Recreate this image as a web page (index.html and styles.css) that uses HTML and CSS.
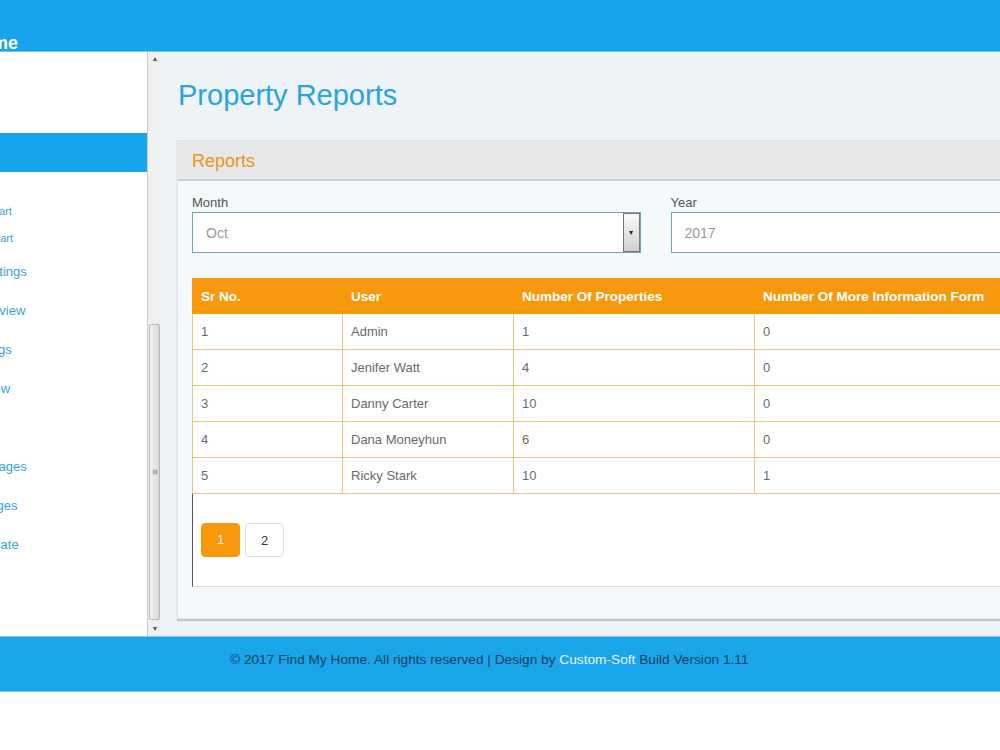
FILE: index.html
```html
<!DOCTYPE html>
<html lang="en">
<head>
    <meta charset="UTF-8">
    <meta name="viewport" content="width=device-width, initial-scale=1.0">
    <title>Property Reports</title>
    <link rel="stylesheet" href="styles.css">
</head>
<body>

<div class="page">
    <header class="topbar">
        <span class="brand">Find My Home</span>
    </header>

    <div class="layout">
        <aside class="sidebar">
            <div class="profile"></div>
            <div class="menu-active">Dashboard</div>
            <ul class="menu">
                <li class="sub"><a href="#">Pie Chart</a></li>
                <li class="sub"><a href="#">Bar Chart</a></li>
                <li><a href="#">Property Listings</a></li>
                <li><a href="#">Property Review</a></li>
                <li><a href="#">Agent Listings</a></li>
                <li><a href="#">Agent Review</a></li>
                <li><a href="#">Reports</a></li>
                <li><a href="#">Agent Messages</a></li>
                <li><a href="#">Manage Pages</a></li>
                <li><a href="#">Email Template</a></li>
                <li><a href="#">Logout</a></li>
            </ul>
        </aside>

        <div class="scrollbar">
            <div class="sb-arrow">&#9652;</div>
            <div class="sb-track">
                <div class="sb-thumb"><span class="sb-grip">&#8801;</span></div>
            </div>
            <div class="sb-arrow">&#9662;</div>
        </div>

        <main class="content">
            <h1>Property Reports</h1>

            <div class="panel">
                <div class="panel-heading">Reports</div>
                <div class="panel-body">
                    <div class="filters">
                        <div class="field">
                            <label>Month</label>
                            <div class="select">
                                <span>Oct</span>
                                <span class="select-btn">&#9662;</span>
                            </div>
                        </div>
                        <div class="field">
                            <label>Year</label>
                            <div class="select">
                                <span>2017</span>
                            </div>
                        </div>
                    </div>

                    <table class="report">
                        <thead>
                            <tr>
                                <th class="c1">Sr No.</th>
                                <th class="c2">User</th>
                                <th class="c3">Number Of Properties</th>
                                <th>Number Of More Information Form</th>
                            </tr>
                        </thead>
                        <tbody>
                            <tr><td>1</td><td>Admin</td><td>1</td><td>0</td></tr>
                            <tr><td>2</td><td>Jenifer Watt</td><td>4</td><td>0</td></tr>
                            <tr><td>3</td><td>Danny Carter</td><td>10</td><td>0</td></tr>
                            <tr><td>4</td><td>Dana Moneyhun</td><td>6</td><td>0</td></tr>
                            <tr><td>5</td><td>Ricky Stark</td><td>10</td><td>1</td></tr>
                        </tbody>
                    </table>

                    <div class="pager-box">
                        <div class="pager">
                            <a href="#" class="active">1</a>
                            <a href="#">2</a>
                        </div>
                    </div>
                </div>
            </div>
        </main>
    </div>

    <footer class="footer">
        &copy; 2017 Find My Home. All rights reserved | Design by <span class="credit">Custom-Soft</span> Build Version 1.11
    </footer>
</div>

</body>
</html>
```

FILE: styles.css
```css
/* page is wider than the window and shifted left, like the capture */
body {
    margin: 0;
    background-color: #fff;
    font-family: "Liberation Sans", Arial, sans-serif;
    overflow: hidden;
}

.page {
    width: 1250px;
    margin-left: -100px;
}

.topbar {
    height: 51px;
    background-color: #17a4ea;
    border-bottom: 1px solid #6cc6f2;
    display: flex;
    align-items: flex-start;
}

.brand {
    color: #fff;
    font-weight: bold;
    font-size: 18px;
    line-height: 22px;
    margin: 32px 0 0 -5px;
}

.layout {
    display: flex;
    height: 584px;
}

/* sidebar */
.sidebar {
    width: 247px;
    background-color: #fff;
    overflow: hidden;
}

.profile {
    height: 81px;
}

.menu-active {
    height: 39px;
    background-color: #17a4ea;
    color: #17a4ea;
    padding-left: 30px;
    line-height: 39px;
    font-size: 13px;
}

.menu {
    list-style: none;
    margin: 0;
    padding: 28px 0 0;
}

.menu li {
    height: 39px;
    line-height: 20px;
    padding-left: 30px;
}

.menu li.sub {
    height: 27px;
    padding-left: 66px;
}

.menu li.sub + li:not(.sub) {
    margin-top: 7px;
}

.menu a {
    color: #3da2d2;
    font-size: 13px;
    text-decoration: none;
}

.menu li.sub a {
    font-size: 11px;
}

/* fake scrollbar */
.scrollbar {
    width: 13px;
    border-left: 1px solid #c9c9c9;
    background-color: #f0f0f0;
    display: flex;
    flex-direction: column;
}

.sb-arrow {
    height: 14px;
    font-size: 8px;
    line-height: 14px;
    text-align: center;
    color: #555;
}

.sb-track {
    flex: 1;
    display: flex;
    flex-direction: column;
    justify-content: flex-end;
    padding-bottom: 2px;
}

.sb-thumb {
    height: 294px;
    margin: 0 1px;
    border: 1px solid #b8b8b8;
    border-radius: 2px;
    background: linear-gradient(to right, #f4f4f4, #d8d8d8);
    display: flex;
    align-items: center;
    justify-content: center;
}

.sb-grip {
    font-size: 9px;
    color: #777;
    transform: rotate(90deg);
}

/* main area */
.content {
    flex: 1;
    background-color: #eef3f7;
    padding: 27px 16px 0 16px;
}

.content h1 {
    margin: 0 0 29px 1px;
    font-size: 29px;
    line-height: 32px;
    font-weight: normal;
    color: #29a4de;
}

.panel {
    background-color: #f5f9fc;
    border: 1px solid #dfe3e6;
    box-shadow: 0 2px 1px #c4c6c8;
}

.panel-heading {
    height: 38px;
    line-height: 40px;
    background-color: #e8e8e8;
    border-bottom: 2px solid #cfcfcf;
    padding-left: 14px;
    font-size: 18px;
    color: #ee9414;
}

.panel-body {
    padding: 14px 14px 31px 14px;
}

.filters {
    display: grid;
    grid-template-columns: 1fr 1fr;
    gap: 30px;
}

.field label {
    display: block;
    font-size: 13px;
    line-height: 16px;
    color: #555;
    margin-bottom: 1px;
}

.select {
    height: 39px;
    background-color: #fff;
    border: 1px solid #66aab8;
    display: flex;
    align-items: center;
    justify-content: space-between;
    padding-left: 13px;
    font-size: 14px;
    color: #9a9a9a;
}

.select-btn {
    width: 15px;
    height: 37px;
    border: 1px solid #777;
    background: linear-gradient(#fafafa, #cfcfcf);
    color: #222;
    font-size: 8px;
    display: flex;
    align-items: center;
    justify-content: center;
}

/* table */
.report {
    width: 100%;
    margin-top: 25px;
    border-collapse: collapse;
    background-color: #fff;
    font-size: 13px;
}

.report th {
    background-color: #f8990d;
    color: #fff;
    font-weight: bold;
    font-size: 13.5px;
    text-align: left;
    height: 34px;
    padding: 0 8px;
    border: 1px solid #f8990d;
}

.report td {
    height: 35px;
    padding: 0 8px;
    color: #6a6a6a;
    border: 1px solid #efc67c;
}

.report .c1 {
    width: 133px;
}

.report .c2 {
    width: 154px;
}

.report .c3 {
    width: 224px;
}

.pager-box {
    background-color: #fff;
    border-left: 1px solid #555;
    border-bottom: 1px solid #dcdcdc;
    padding: 29px 8px 29px;
}

.pager {
    display: flex;
    gap: 5px;
}

.pager a {
    width: 37px;
    height: 32px;
    border: 1px solid #e0e0e0;
    border-radius: 4px;
    display: flex;
    align-items: center;
    justify-content: center;
    font-size: 13px;
    color: #333;
    text-decoration: none;
    background-color: #fff;
}

.pager a.active {
    background-color: #f8990d;
    border-color: #f8990d;
    color: #fff;
    font-size: 12px;
}

/* footer */
.footer {
    height: 54px;
    background-color: #18a5ea;
    border-top: 1px solid #7fcdf2;
    border-bottom: 1px solid #7fcdf2;
    padding-left: 330px;
    line-height: 46px;
    font-size: 13.7px;
    color: #1d3f5e;
}

.credit {
    color: #eaf6ff;
}
```
